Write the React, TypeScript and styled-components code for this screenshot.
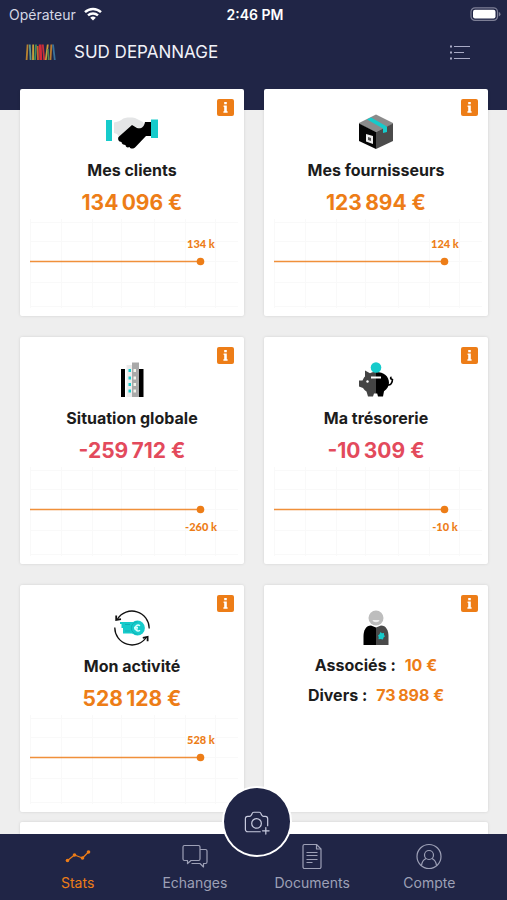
import React from "react";
import styled, { createGlobalStyle } from "styled-components";

const navy = "#202546";
const orange = "#ed7d17";
const red = "#e34a5c";
const teal = "#16cbcb";

const GlobalStyle = createGlobalStyle`
  * { box-sizing: border-box; }
  body { margin: 0; font-family: Inter, "Liberation Sans", sans-serif; background: #eeeeee; }
  button { font: inherit; border: 0; padding: 0; cursor: pointer; }
  h1, h2, p { margin: 0; }
`;

const Screen = styled.div`
  display: flex;
  flex-direction: column;
  height: 100vh;
  background: #eeeeee;
`;

const Header = styled.header`
  flex: none;
  background: ${navy};
  color: #f1f2f8;
  padding-bottom: 34px;
`;

const StatusBar = styled.div`
  display: grid;
  grid-template-columns: 1fr auto 1fr;
  align-items: center;
  height: 28px;
  padding: 0 6px 0 9px;
  font-size: 14px;
`;

const Carrier = styled.span`
  display: flex;
  align-items: center;
  gap: 8px;
  color: #d5d7e4;
`;

const Clock = styled.time`
  font-weight: 600;
  color: #fff;
`;

const Battery = styled.svg`
  justify-self: end;
`;

const TitleBar = styled.div`
  display: flex;
  align-items: center;
  gap: 18px;
  height: 48px;
  padding: 0 36px 0 25px;
`;

const Company = styled.h1`
  flex: 1;
  font-size: 17px;
  font-weight: 400;
  line-height: 24px;
`;

const IconButton = styled.button`
  display: flex;
  background: none;
  color: #a9abc6;
`;

const Content = styled.main`
  flex: 1;
  min-height: 0;
  margin-top: -21px;
  padding: 0 19px 20px 20px;
  overflow-y: auto;
  scrollbar-width: none;
`;

const Grid = styled.div`
  display: grid;
  grid-template-columns: 1fr 1fr;
  gap: 21px 20px;
`;

const Card = styled.article`
  position: relative;
  display: flex;
  flex-direction: column;
  align-items: center;
  min-height: 227px;
  padding-top: 25px;
  background: #fff;
  border-radius: 2px;
  box-shadow: 0 0 3px rgba(0, 0, 0, 0.12);
`;

const WideCard = styled(Card)`
  margin-top: 10px;
`;

const InfoButton = styled.button`
  position: absolute;
  top: 10px;
  right: 10px;
  display: flex;
  width: 17px;
  height: 17px;
  border-radius: 2px;
  background: ${orange};
`;

const CardTitle = styled.h2`
  margin-top: 8px;
  font-size: 16px;
  font-weight: 700;
  line-height: 24px;
  color: #1c1c1c;
`;

const Amount = styled.p<{ $negative?: boolean }>`
  margin-top: 7px;
  font-size: 21px;
  font-weight: 700;
  line-height: 28px;
  color: ${(p) => (p.$negative ? red : orange)};
`;

const ChartSvg = styled.svg`
  display: block;
  width: 100%;
  height: auto;
  font-family: Lato, "Liberation Sans", sans-serif;
  font-size: 11px;
  font-weight: 900;
`;

const Facts = styled.dl`
  display: grid;
  gap: 6px;
  margin: 7px 0 0;
`;

const Fact = styled.div`
  display: flex;
  justify-content: center;
  gap: 9px;
  font-size: 16px;
  font-weight: 700;
  line-height: 24px;
  color: #1c1c1c;
`;

const FactValue = styled.dd`
  margin: 0;
  color: ${orange};
`;

const TabBar = styled.nav`
  position: relative;
  flex: none;
  display: grid;
  grid-template-columns: repeat(4, 1fr);
  height: 66px;
  padding: 0 19px;
  background: ${navy};
`;

const Tab = styled.button<{ $active?: boolean }>`
  display: flex;
  flex-direction: column;
  align-items: center;
  padding-top: 8px;
  background: none;
  color: ${(p) => (p.$active ? orange : "#9da0b6")};
`;

const TabLabel = styled.span`
  margin-top: 3px;
  font-size: 14px;
  line-height: 20px;
`;

const CameraButton = styled.button`
  position: absolute;
  top: -48px;
  left: 50%;
  display: flex;
  align-items: center;
  justify-content: center;
  width: 70px;
  height: 71px;
  margin-left: -32px;
  border: 2px solid #fff;
  border-radius: 50%;
  background: ${navy};
  color: #c8cbdf;
`;

const Wifi = () => (
  <svg width="18" height="14" viewBox="0 0 18 14" fill="none" stroke="#fff" strokeWidth="2.4">
    <path d="M1 5.2a11.6 11.6 0 0 1 16 0" />
    <path d="M4 8.4a7.4 7.4 0 0 1 10 0" />
    <path d="M9 13.6 6.2 10.8a4.2 4.2 0 0 1 5.6 0Z" fill="#fff" stroke="none" />
  </svg>
);

const Logo = () => (
  <svg width="31" height="18" viewBox="0 0 31 18" fill="none" strokeWidth="1.800">
    <path d="M2.600 1.500 1.600 17" stroke="#b9822f" />
    <path d="M4.800 1.500 5.600 17" stroke="#5d9a8a" />
    <path d="M8.200 1.500 8 17" stroke="#c9a03a" />
    <path d="M11 1.500 10 17" stroke="#3f8f5a" />
    <path d="M12.600 3 13 17" stroke="#c8612d" />
    <path d="M15.200 1.500 15.800 17" stroke="#d3293a" strokeWidth="2.800" />
    <path d="M17.800 1.500 19.200 17" stroke="#c93138" />
    <path d="M22.800 1.500 20.800 17" stroke="#cf9a3a" />
    <path d="M23 6 23.600 17" stroke="#4c8f55" strokeWidth="1.400" />
    <path d="M26.400 1.500 25.400 17" stroke="#b97a2f" />
    <path d="M28 1.500 29.800 17" stroke="#39729a" />
  </svg>
);

const Handshake = () => (
  <svg width="54" height="36" viewBox="0 0 54 36">
    <path fill="#e4e5e6" d="M9 8.500c3-.5 5-1 8-3C19 3.500 25 3 30 4l8 4 2 5-2 2-8-2-11 13-4-2-3-4-3-1Z" />
    <path fill="#000" d="m27 11 5 3c4 1 7-.5 8-6h6v14h-5L30.500 33c-2 2-5 2-6 0-2 1-4 0-4-2-2 0-4-1-4-3-3 0-4-3-3-5Z" />
    <path fill={teal} d="M1 6h6v21H1zM46 5.500h7V24h-7z" />
  </svg>
);

const Parcel = () => (
  <svg width="36" height="36" viewBox="0 0 36 36">
    <path fill="#8b8b8b" d="M18 .5 35 9v1L18 18 1 10V9Z" />
    <path fill="#050505" d="M1 9.500 18 18v17L1 27Z" />
    <path fill="#4b4b4b" d="m35 9.500-17 8.500v17l17-8Z" />
    <path fill={teal} d="m9 5.500 4-2 15 8.500 1 1v5l-4 1v-4.500Z" />
    <path fill="#eee" d="m8 20 7 2v8l-7-2.500Z" />
    <path fill="#555" d="m10 23 3 1v3l-3-1Z" />
  </svg>
);

const Building = () => (
  <svg width="24" height="36" viewBox="0 0 24 36">
    <path fill="#000" d="M1 7h4v28H1zM19 7h4.500v28H19z" />
    <path fill="#ececec" d="M6.500 3H12v32H6.500z" />
    <path fill="#a9a9a9" d="M12 .5h7V35h-7z" />
    <path fill={teal} d="M8.500 7h2.500v3H8.500zM8.500 14.500h2.500v3H8.500zM8.500 21h2.500v3H8.500zM8.500 27.500h2.500v3H8.500z" />
    <path fill="#f4f4ec" d="M13.500 7h2.500v3h-2.500zM13.500 14.500h2.500v3h-2.500zM13.500 21h2.500v3h-2.500zM13.500 27.500h2.500v3h-2.500z" />
  </svg>
);

const PiggyBank = () => (
  <svg width="36" height="36" viewBox="0 0 36 36">
    <path fill="#444" d="M18 10c-3 0-4.500.5-6 1.200L7 8.500v6c-1.500 1.500-2 3-2.500 4H1v6l4 1.500c1 1.500 2 2.500 3.500 3.500L10 34.500h5l1-3h2Z" />
    <path fill="#000" d="M18 10c8 0 13 4.500 13 10.700 0 3.500-2 6.500-5 8.500L25 34.500h-5l-.8-3H18Z" />
    <circle cx="18" cy="5.500" r="5.300" fill={teal} />
    <path fill="none" stroke="#000" strokeWidth="1.600" d="M29.500 23c3 .5 5-2 5-6M34.500 17c-2 .5-2.500-1.500-1-2" />
    <path fill="none" stroke="#fff" strokeWidth="2" d="M13 15.500h10" />
    <circle cx="9.500" cy="19.500" r="1.200" fill="#fff" />
  </svg>
);

const CashFlow = () => (
  <svg width="36" height="36" viewBox="0 0 36 36">
    <g fill="none" stroke="#111" strokeWidth="1.300">
      <path d="M3.500 9A17.200 17.200 0 0 1 35.200 18.500M.8 17.500A17.200 17.200 0 0 0 32.500 27" />
      <path d="M2.200 5.500v4.500l4.800-.8M28.800 27.800l4.800-1v4.400" strokeWidth="1.800" />
    </g>
    <path fill={teal} d="M6 12h14v11.500H9V18H7.500v-4H6Z" />
    <circle cx="23.500" cy="18" r="7.400" fill={teal} />
    <path fill="none" stroke="#0fa9b0" strokeWidth=".8" d="M11 14.500h5M11 21h5M23.500 11.800a6.200 6.200 0 0 0 0 12.400" />
    <path fill="none" stroke="#d8ffff" strokeWidth="1.300" d="M26 15.800a2.900 2.900 0 1 0 0 4.400M20 17.300h4M20 18.900h4" />
  </svg>
);

const Person = () => (
  <svg width="28" height="36" viewBox="0 0 28 36">
    <circle cx="14" cy="8" r="7.500" fill="#bdbdbd" />
    <path fill="#eee" d="M10.500 10h7c-.5 3-6.500 3-7 0Z" />
    <path fill="#000" d="m9 15.500 5 2V35H1.500V26c0-5.500 2.500-10.500 7.500-10.500Z" />
    <path fill="#4a4a4a" d="m19 15.500-5 2V35h12.500V26c0-5.500-2.500-10.500-7.500-10.500Z" />
    <path fill={teal} d="m18.500 22 1.500 1.200 2-.2v2l1 1.300-1.500 1.300-.5 1.900-2.500-.5-2 .2.200-2.200-.7-1.500 1.500-1.200Z" />
  </svg>
);

const GRID_COLUMNS = [10, 41, 72, 101, 134, 165, 195];
const GRID_ROWS = [6, 25, 66, 90];

const Chart = ({ label, below }: { label: string; below?: boolean }) => (
  <ChartSvg viewBox="0 0 224 95" role="img" aria-label={label}>
    <g stroke="#f9f9f9">
      {GRID_COLUMNS.map((x) => (
        <path key={x} d={`M${x + 0.5} 2V91`} />
      ))}
      {GRID_ROWS.map((y) => (
        <path key={y} d={`M10 ${y - 0.5}H218`} />
      ))}
      <path d="M180 44.500h38" />
    </g>
    <path d="M10 44.500h171" stroke={orange} strokeOpacity=".85" strokeWidth="1.500" />
    <circle cx="180.500" cy="44.500" r="3.800" fill={orange} />
    <text x="181" y={below ? 66 : 31} textAnchor="middle" fill={orange}>
      {label}
    </text>
  </ChartSvg>
);

const Info = () => (
  <InfoButton aria-label="Informations">
    <svg width="17" height="17" viewBox="0 0 17 17" fill="#fff">
      <path d="M7.200 3h2.600v2.300H7.200zM6.600 6.500h3.200v5.700h.8v1.600H6.400v-1.600h.8V8h-.6Z" />
    </svg>
  </InfoButton>
);

const cards = [
  { title: "Mes clients", amount: "134\u202f096 €", label: "134 k", Icon: Handshake },
  { title: "Mes fournisseurs", amount: "123\u202f894 €", label: "124 k", Icon: Parcel },
  { title: "Situation globale", amount: "-259\u202f712 €", label: "-260 k", Icon: Building, negative: true },
  { title: "Ma trésorerie", amount: "-10\u202f309 €", label: "-10 k", Icon: PiggyBank, negative: true },
  { title: "Mon activité", amount: "528\u202f128 €", label: "528 k", Icon: CashFlow },
];

const TabIcon = ({ children }: { children: React.ReactNode }) => (
  <svg width="28" height="28" viewBox="0 0 28 28" fill="none" stroke="currentColor" strokeWidth="1.200" strokeLinejoin="round">
    {children}
  </svg>
);

export default function App() {
  return (
    <Screen>
      <GlobalStyle />
      <Header>
        <StatusBar>
          <Carrier>
            Opérateur <Wifi />
          </Carrier>
          <Clock>2:46 PM</Clock>
          <Battery width="31" height="14" viewBox="0 0 31 14">
            <rect x="1" y=".8" width="26.500" height="12.600" rx="4" fill="none" stroke="#7d7f96" strokeWidth="1.200" />
            <rect x="3" y="2.800" width="22.500" height="8.600" rx="2" fill="#fff" />
            <path d="M28.800 5v4.400q1.700-.6 1.700-2.200T28.800 5" fill="#7d7f96" />
          </Battery>
        </StatusBar>
        <TitleBar>
          <Logo />
          <Company>SUD DEPANNAGE</Company>
          <IconButton aria-label="Menu">
            <svg width="23" height="18" viewBox="0 0 23 18" fill="none" stroke="currentColor" strokeWidth="1.200">
              <path d="M6 3.500h16M6 9.500h10M6 15.500h16" />
              <path d="M2 3.500h2M2 9.500h2M2 15.500h2" strokeWidth="2" />
            </svg>
          </IconButton>
        </TitleBar>
      </Header>

      <Content>
        <Grid>
          {cards.map(({ title, amount, label, Icon, negative }) => (
            <Card key={title}>
              <Info />
              <Icon />
              <CardTitle>{title}</CardTitle>
              <Amount $negative={negative}>{amount}</Amount>
              <Chart label={label} below={negative} />
            </Card>
          ))}
          <Card>
            <Info />
            <Person />
            <Facts>
              <Fact>
                <dt>Associés :</dt>
                <FactValue>10 €</FactValue>
              </Fact>
              <Fact>
                <dt>Divers :</dt>
                <FactValue>{"73\u202f898 €"}</FactValue>
              </Fact>
            </Facts>
          </Card>
        </Grid>
        <WideCard />
      </Content>

      <TabBar>
        <Tab $active>
          <TabIcon>
            <path d="m3.500 18.500 7-5.500 8 3 6-6" />
            <g fill="currentColor" stroke="none">
              <circle cx="3.500" cy="18.500" r="1.800" />
              <circle cx="10.500" cy="13" r="1.800" />
              <circle cx="18.500" cy="16" r="1.800" />
              <circle cx="24.500" cy="10" r="1.800" />
            </g>
          </TabIcon>
          <TabLabel>Stats</TabLabel>
        </Tab>
        <Tab>
          <TabIcon>
            <path d="M3.500 3.500h14a1.500 1.500 0 0 1 1.500 1.500v12a1.500 1.500 0 0 1-1.500 1.500H10l-3.500 3v-3h-3A1.500 1.500 0 0 1 2 17V5a1.500 1.500 0 0 1 1.500-1.500Z" />
            <path d="M19 7.500h5.500A1.500 1.500 0 0 1 26 9v11a1.500 1.500 0 0 1-1.500 1.500h-2V25L19 21.500h-8.500" />
          </TabIcon>
          <TabLabel>Echanges</TabLabel>
        </Tab>
        <Tab>
          <TabIcon>
            <path d="M6.500 2.500h12l4.500 4.500v18a1.500 1.500 0 0 1-1.500 1.500h-15A1.500 1.500 0 0 1 5 25V4a1.500 1.500 0 0 1 1.500-1.500Z" />
            <path d="M18.500 2.500V7H23M8.500 10.500h11M8.500 13.500h11M8.500 17.500h11M8.500 20.500h6" />
          </TabIcon>
          <TabLabel>Documents</TabLabel>
        </Tab>
        <Tab>
          <TabIcon>
            <circle cx="14" cy="14.500" r="12" />
            <circle cx="14" cy="13" r="4.500" />
            <path d="M6.500 23.500c.5-4 2-6 4.700-7M21.500 23.500c-.5-4-2-6-4.700-7" />
          </TabIcon>
          <TabLabel>Compte</TabLabel>
        </Tab>
        <CameraButton aria-label="Prendre une photo">
          <svg width="26" height="26" viewBox="0 0 28 28" fill="none" stroke="currentColor" strokeWidth="1.300" strokeLinecap="round" strokeLinejoin="round">
            <path d="M17.500 24.500H4A2.500 2.500 0 0 1 1.500 22V10.500A2.500 2.500 0 0 1 4 8h2c1 0 1.500-.5 2-1.500l.5-1Q9.200 3.500 10.500 3.500h6q1.300 0 2 2l.5 1c.5 1 1 1.500 2 1.500h2a2.500 2.500 0 0 1 2.500 2.500V18" />
            <circle cx="13.500" cy="15.500" r="5.200" />
            <path d="M23.500 20v7M20 23.500h7" />
          </svg>
        </CameraButton>
      </TabBar>
    </Screen>
  );
}
